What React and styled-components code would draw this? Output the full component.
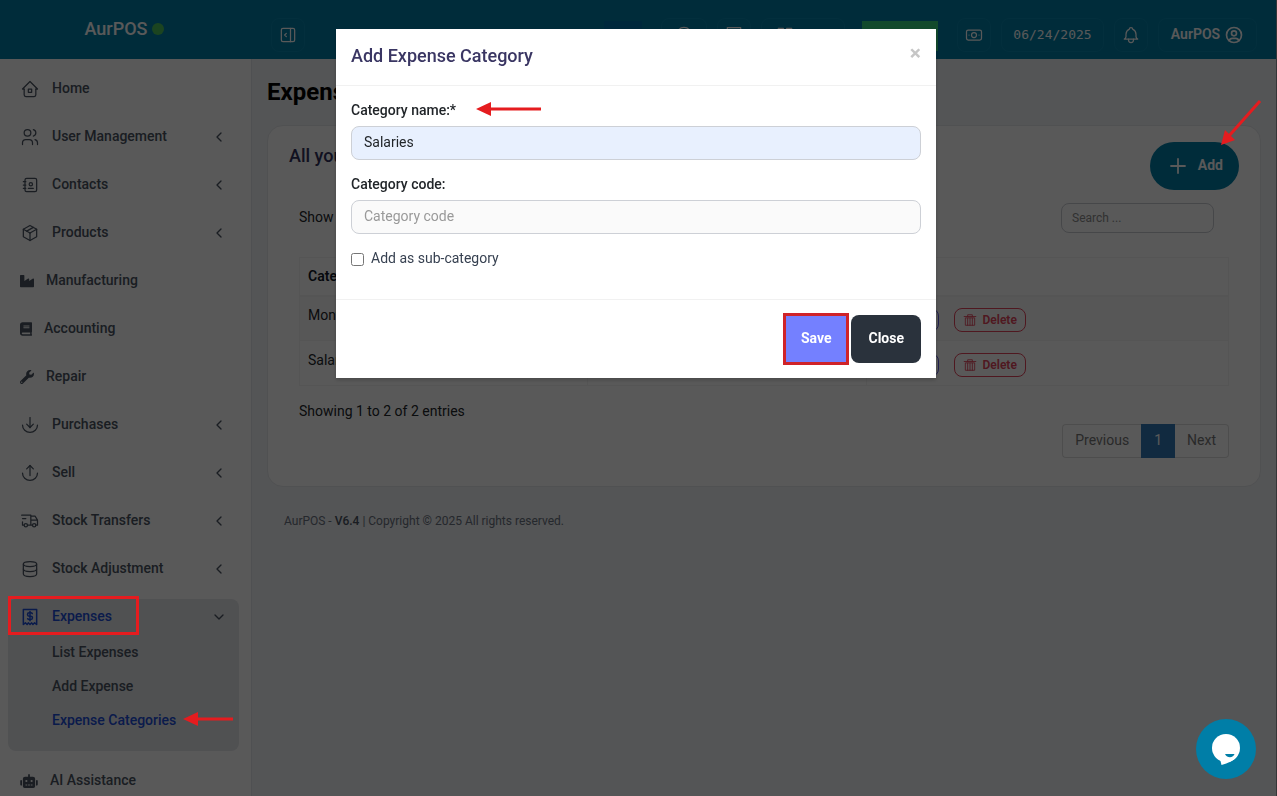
import React from 'react';
import styled, { createGlobalStyle } from 'styled-components';
import { FaBook, FaIndustry, FaRobot, FaWrench } from 'react-icons/fa';

const GlobalStyle = createGlobalStyle`
  * {
    box-sizing: border-box;
  }
  body {
    margin: 0;
    font-family: Roboto, "Liberation Sans", sans-serif;
    font-size: 14px;
    line-height: 20px;
    color: #212529;
    background: #f0f2f5;
    overflow: hidden;
  }
  button, input, select {
    font-family: inherit;
    font-size: inherit;
    line-height: inherit;
  }
  a {
    color: inherit;
    text-decoration: none;
  }
`

const RED = '#e51c1f';

const Page = styled.div`
  display: flex;
  flex-direction: column;
  height: 100vh;
  overflow: hidden;
  border-right: 1px solid #98989f;
`

const Header = styled.header`
  display: flex;
  flex: none;
  height: 59px;
  color: #ffffff;
  background: #007ea7;
`

const Brand = styled.a`
  display: flex;
  align-items: center;
  justify-content: center;
  gap: 4px;
  width: 248px;
  height: 58px;
  flex: none;
  font-size: 18px;
  font-weight: 500;
`

const OnlineDot = styled.span`
  width: 12px;
  height: 12px;
  border-radius: 50%;
  background: #4fc45c;
`

const Toolbar = styled.div`
  display: flex;
  flex: 1;
  align-items: flex-start;
  gap: 10px;
  padding: 18px 19px 0 23px;
`

const ToolButton = styled.button`
  display: flex;
  align-items: center;
  justify-content: ${props => props.$align || 'center'};
  gap: 4px;
  flex: none;
  width: ${props => props.$width || 34}px;
  height: 34px;
  padding: ${props => (props.$align ? '0 13px' : '0')};
  border: 1px solid #0a86ae;
  border-radius: 8px;
  color: #ffffff;
  font-size: 14px;
  font-weight: 600;
  background: transparent;
`

const DateButton = styled(ToolButton)`
  font-family: "DejaVu Sans Mono", monospace;
  font-size: 13px;
  font-weight: 400;
`

const Spacer = styled.div`
  flex: 1;
`

const FlatButton = styled.button`
  display: flex;
  align-items: center;
  justify-content: ${props => props.$align || 'center'};
  flex: none;
  width: ${props => props.$width}px;
  height: 30px;
  margin: 3px 9px 0 7px;
  padding: 0 14px;
  border: 0;
  color: #ffffff;
  font-weight: 600;
  background: ${props => props.$color};
`

const Columns = styled.div`
  display: flex;
  flex: 1;
  min-height: 0;
`

const Sidebar = styled.nav`
  display: flex;
  flex-direction: column;
  gap: 12px;
  flex: none;
  width: 252px;
  padding: 12px 12px 0 8px;
  border-right: 1px solid #e2e5ea;
  background: #ffffff;
  overflow: hidden;
`

const NavLink = styled.a`
  position: relative;
  display: flex;
  align-items: center;
  gap: 12px;
  flex: none;
  height: 36px;
  padding: 0 12px;
  font-weight: 500;
  color: ${props => (props.$active ? '#1d4ed8' : '#4b5563')};
  svg {
    flex: none;
  }
`

const NavText = styled.span`
  flex: 1;
  padding-bottom: 2px;
`

const SolidIcon = styled.span`
  display: flex;
  width: ${props => props.$width}px;
  svg {
    width: 100%;
    height: 14px;
  }
`

const Chevron = styled.span`
  display: flex;
  color: #4b5563;
`

const NavGroup = styled.div`
  flex: none;
  border-radius: 8px;
  background: #e5e7eb;
`

const SubMenu = styled.div`
  display: flex;
  flex-direction: column;
  align-items: flex-start;
  gap: 14px;
  padding: 7px 0 21px 44px;
`

const SubLink = styled.a`
  display: flex;
  align-items: center;
  gap: 7px;
  height: 20px;
  font-weight: 500;
  color: ${props => (props.$active ? '#1d4ed8' : '#4b5563')};
`

const Main = styled.main`
  flex: 1;
  min-width: 0;
  padding: 17px 15px 0;
`

const PageTitle = styled.h1`
  margin: 0 0 17px;
  font-size: 24px;
  line-height: 32px;
  font-weight: 700;
  color: #000000;
`

const Card = styled.section`
  padding: 16px 21px 28px;
  border: 1px solid #e5e7eb;
  border-radius: 16px;
  background: #ffffff;
`

const CardHead = styled.div`
  display: flex;
  justify-content: space-between;
  align-items: flex-start;
`

const CardTitle = styled.h2`
  margin: 4px 0 0;
  font-size: 18px;
  line-height: 20px;
  font-weight: 500;
  color: #32325d;
`

const AddButton = styled.button`
  position: relative;
  display: flex;
  align-items: center;
  gap: 8px;
  height: 48px;
  padding: 0 16px;
  border: 0;
  border-radius: 24px;
  color: #ffffff;
  font-weight: 700;
  background: #007ea7;
`

const ButtonText = styled.span`
  padding-bottom: 2px;
`

const TableTools = styled.div`
  display: flex;
  justify-content: space-between;
  align-items: center;
  padding: 13px 25px 24px 10px;
`

const ShowLabel = styled.label`
  display: flex;
  align-items: center;
  gap: 5px;
  padding-bottom: 2px;
`

const ShowSelect = styled.select`
  height: 28px;
  border: 1px solid #d1d5db;
  border-radius: 8px;
  background: #ffffff;
`

const Search = styled.input`
  width: 153px;
  height: 30px;
  padding: 0 10px;
  border: 1px solid #c9ccd2;
  border-radius: 8px;
  font-size: 12px;
  background: transparent;
  &::placeholder {
    color: #8d8d8d;
  }
`

const TableWrap = styled.div`
  padding: 0 10px;
`

const Table = styled.table`
  width: 100%;
  border-collapse: collapse;
  border: 1px solid #f4f4f4;
  table-layout: fixed;
  th, td {
    padding: 0 8px;
    border: 1px solid #f4f4f4;
    text-align: left;
  }
  th {
    height: 38px;
    border-bottom-width: 2px;
    font-weight: 600;
    color: #111827;
  }
  td {
    height: 45px;
    padding-bottom: 7px;
  }
  tbody tr:nth-child(odd) {
    background: #f9f9f9;
  }
`

const Actions = styled.div`
  display: flex;
  gap: 15px;
  padding-top: 10px;
`

const RowButton = styled.button`
  display: flex;
  align-items: center;
  justify-content: center;
  gap: 6px;
  width: ${props => props.$width}px;
  height: 24px;
  padding: 0;
  border: 1px solid ${props => props.$color};
  border-radius: 8px;
  color: ${props => props.$color};
  font-size: 12px;
  font-weight: 600;
  background: transparent;
`

const Entries = styled.div`
  padding: 15px 10px 3px;
`

const Pager = styled.div`
  display: flex;
  justify-content: flex-end;
  padding: 0 10px;
`

const PageButton = styled.button`
  height: 34px;
  padding: 0 12px 2px;
  border: 1px solid ${props => (props.$current ? '#337ab7' : '#dddddd')};
  color: ${props => (props.$current ? '#ffffff' : '#777777')};
  background: ${props => (props.$current ? '#337ab7' : 'transparent')};
  &:first-child {
    border-right: 0;
    border-radius: 4px 0 0 4px;
  }
  &:last-child {
    border-left: 0;
    border-radius: 0 4px 4px 0;
  }
`

const Footer = styled.footer`
  padding: 24px 17px;
  font-size: 12px;
  color: #6b7280;
  b {
    font-weight: 500;
    color: #4b5563;
  }
`

const Backdrop = styled.div`
  position: fixed;
  inset: 0;
  z-index: 10;
  display: flex;
  justify-content: center;
  align-items: flex-start;
  padding-top: 29px;
  background: rgba(0, 0, 0, 0.65);
`

const Modal = styled.form`
  width: 600px;
  margin-right: 5px;
  background: #ffffff;
  box-shadow: 0 2px 4px rgba(0, 0, 0, 0.2);
`

const ModalHead = styled.div`
  display: flex;
  justify-content: space-between;
  align-items: flex-start;
  padding: 14px 15px 16px;
  border-bottom: 1px solid #f1f1f1;
`

const ModalTitle = styled.h4`
  margin: 0;
  font-size: 18px;
  line-height: 26px;
  font-weight: 500;
  color: #3a3663;
`

const ModalClose = styled.button`
  padding: 0;
  border: 0;
  font-size: 21px;
  line-height: 20px;
  font-weight: 700;
  color: #c6c6c6;
  background: transparent;
`

const ModalBody = styled.div`
  padding: 15px;
`

const Field = styled.div`
  margin-bottom: 15px;
`

const LabelRow = styled.div`
  display: flex;
  align-items: center;
  gap: 20px;
  height: 20px;
  margin-bottom: 5px;
  padding-bottom: 2px;
  label {
    font-weight: 500;
    color: #212529;
  }
`

const TextInput = styled.input`
  display: block;
  width: 100%;
  height: 34px;
  padding: 0 12px 2px;
  border: 1px solid #cdd0d6;
  border-radius: 8px;
  color: #212529;
  background: ${props => (props.$filled ? '#e8f0fe' : '#fafafa')};
  &::placeholder {
    color: #999999;
  }
`

const CheckRow = styled.div`
  display: flex;
  align-items: center;
  gap: 7px;
  height: 20px;
  margin-bottom: 15px;
  label {
    padding-bottom: 2px;
    color: #374151;
  }
  input {
    width: 13px;
    height: 13px;
    margin: 0;
  }
`

const ModalFoot = styled.div`
  display: flex;
  justify-content: flex-end;
  gap: 4px;
  padding: 15px;
  border-top: 1px solid #f1f1f1;
`

const ModalButton = styled.button`
  height: 48px;
  padding: 0 17px 2px;
  border: 0;
  border-radius: 8px;
  color: #ffffff;
  font-weight: 700;
  background: ${props => props.$color};
`

const SaveButton = styled(ModalButton)`
  padding: 0 16px 2px;
  border-radius: 0;
  outline: 3px solid #cf2329;
  outline-offset: -1px;
`

const HighlightBox = styled.span`
  position: absolute;
  z-index: 20;
  left: 0;
  top: -3px;
  width: 131px;
  height: 39px;
  border: 3px solid ${RED};
`

const ArrowSvg = styled.svg`
  position: relative;
  z-index: 20;
  flex: none;
`

const AddArrow = styled(ArrowSvg)`
  position: absolute;
  left: 70px;
  top: -44px;
`

const ChatButton = styled.button`
  position: fixed;
  right: 21px;
  bottom: 17px;
  z-index: 20;
  width: 60px;
  height: 60px;
  padding: 0;
  border: 0;
  border-radius: 50%;
  background: #007ea7;
  svg {
    display: block;
  }
`

const icons = {
  home: ['M5 12H3l9-9 9 9h-2', 'M5 12v7a2 2 0 0 0 2 2h10a2 2 0 0 0 2-2v-7', 'M10 12h4v4h-4z'],
  users: ['M5 7a4 4 0 1 0 8 0a4 4 0 1 0-8 0', 'M3 21v-2a4 4 0 0 1 4-4h4a4 4 0 0 1 4 4v2', 'M16 3.13a4 4 0 0 1 0 7.75', 'M21 21v-2a4 4 0 0 0-3-3.85'],
  contacts: ['M20 6v12a2 2 0 0 1-2 2H8a2 2 0 0 1-2-2V6a2 2 0 0 1 2-2h10a2 2 0 0 1 2 2z', 'M10 16h6', 'M11 11a2 2 0 1 0 4 0a2 2 0 1 0-4 0', 'M4 8h3', 'M4 12h3', 'M4 16h3'],
  box: ['M12 3l8 4.5v9L12 21l-8-4.5v-9z', 'M12 12l8-4.5', 'M12 12v9', 'M12 12L4 7.5', 'M16 5.25l-8 4.5'],
  arcDown: ['M12 3v12', 'M16 11l-4 4l-4-4', 'M3 12a9 9 0 0 0 18 0'],
  arcUp: ['M12 15V3', 'M16 7l-4-4l-4 4', 'M3 12a9 9 0 0 0 18 0'],
  truck: ['M5 17a2 2 0 1 0 4 0a2 2 0 1 0-4 0', 'M15 17a2 2 0 1 0 4 0a2 2 0 1 0-4 0', 'M5 17H3v-4M2 5h11v12m-4 0h6m4 0h2v-6h-8m0-5h5l3 5', 'M3 9h4'],
  database: ['M4 6a8 3 0 1 0 16 0a8 3 0 1 0-16 0', 'M4 6v6a8 3 0 0 0 16 0V6', 'M4 12v6a8 3 0 0 0 16 0v-6'],
  receipt: ['M4 21V3h16v18l-2.500-2-2 2-1.500-2-2 2-2-2-1.500 2-2-2z', 'M14.8 8A2 2 0 0 0 13 7h-2a2 2 0 1 0 0 4h2a2 2 0 1 1 0 4h-2a2 2 0 0 1-1.800-1', 'M12 5.500v11'],
  chevronLeft: ['M15 6l-6 6l6 6'],
  chevronDown: ['M6 9l6 6l6-6'],
  collapse: ['M4 6a2 2 0 0 1 2-2h12a2 2 0 0 1 2 2v12a2 2 0 0 1-2 2H6a2 2 0 0 1-2-2z', 'M15 4v16', 'M10 10l-2 2l2 2'],
  cash: ['M9 12a3 3 0 1 0 6 0a3 3 0 1 0-6 0', 'M3 8a2 2 0 0 1 2-2h14a2 2 0 0 1 2 2v8a2 2 0 0 1-2 2H5a2 2 0 0 1-2-2z', 'M18 12h.01', 'M6 12h.01'],
  bell: ['M10 5a2 2 0 1 1 4 0a7 7 0 0 1 4 6v3a4 4 0 0 0 2 3H4a4 4 0 0 0 2-3v-3a7 7 0 0 1 4-6', 'M9 17v1a3 3 0 0 0 6 0v-1'],
  user: ['M3 12a9 9 0 1 0 18 0a9 9 0 1 0-18 0', 'M9 10a3 3 0 1 0 6 0a3 3 0 1 0-6 0', 'M6.168 18.849A4 4 0 0 1 10 16h4a4 4 0 0 1 3.834 2.855'],
  plus: ['M12 5v14', 'M5 12h14'],
  help: ['M3 12a9 9 0 1 0 18 0a9 9 0 1 0-18 0', 'M12 8v8', 'M8 12h8'],
  calculator: ['M4 3h16v18H4z', 'M8 7h8v3H8z'],
  grid: ['M4 4h6v6H4z', 'M14 4h6v6h-6z', 'M4 14h6v6H4z', 'M14 14h6v6h-6z'],
  bolt: ['M13 3v7h6l-8 11v-7H5z'],
  trash: ['M2 6h20', 'M8 6V3h8v3', 'M4 9v12h16V9z', 'M8 9v12', 'M12 9v12', 'M16 9v12'],
  edit: ['M4 20h4L19 9l-4-4L4 16z'],
}

const Icon = ({ name, size = 20, stroke = 2 }) => (
  <svg width={size} height={size} viewBox="0 0 24 24" fill="none" stroke="currentColor" strokeWidth={stroke} strokeLinecap="round" strokeLinejoin="round" aria-hidden="true">
    {icons[name].map(d => <path key={d} d={d} />)}
  </svg>
)

const LeftArrow = ({ width }) => (
  <ArrowSvg width={width} height="16" viewBox={`0 0 ${width} 16`} aria-hidden="true">
    <path d="M0 7L15 0v14z" fill={RED} />
    <path d={`M13 7H${width}`} stroke={RED} strokeWidth="3" />
  </ArrowSvg>
)

const menu = [
  { text: 'Home', icon: 'home' },
  { text: 'User Management', icon: 'users', more: true },
  { text: 'Contacts', icon: 'contacts', more: true },
  { text: 'Products', icon: 'box', more: true },
  { text: 'Manufacturing', solid: <FaIndustry />, width: 14 },
  { text: 'Accounting', solid: <FaBook />, width: 12 },
  { text: 'Repair', solid: <FaWrench />, width: 14 },
  { text: 'Purchases', icon: 'arcDown', more: true },
  { text: 'Sell', icon: 'arcUp', more: true },
  { text: 'Stock Transfers', icon: 'truck', more: true },
  { text: 'Stock Adjustment', icon: 'database', more: true },
]

const rows = [
  { name: 'Monthly Rent', code: '' },
  { name: 'Salaries', code: '' },
]

const SideMenu = () => (
  <Sidebar>
    {menu.map(item => (
      <NavLink href="#" key={item.text}>
        {item.solid ? <SolidIcon $width={item.width}>{item.solid}</SolidIcon> : <Icon name={item.icon} stroke={1.5} />}
        <NavText>{item.text}</NavText>
        {item.more && <Chevron><Icon name="chevronLeft" size={16} /></Chevron>}
      </NavLink>
    ))}
    <NavGroup>
      <NavLink href="#" $active>
        <Icon name="receipt" stroke={1.8} />
        <NavText>Expenses</NavText>
        <HighlightBox />
        <Chevron><Icon name="chevronDown" size={16} /></Chevron>
      </NavLink>
      <SubMenu>
        <SubLink href="#">List Expenses</SubLink>
        <SubLink href="#">Add Expense</SubLink>
        <SubLink href="#" $active>Expense Categories <LeftArrow width={50} /></SubLink>
      </SubMenu>
    </NavGroup>
    <NavLink href="#">
      <SolidIcon $width={18}><FaRobot /></SolidIcon>
      <NavText>AI Assistance</NavText>
    </NavLink>
  </Sidebar>
)

const TopBar = () => (
  <Header>
    <Brand href="#">AurPOS <OnlineDot /></Brand>
    <Toolbar>
      <ToolButton aria-label="Collapse sidebar"><Icon name="collapse" stroke={1.5} /></ToolButton>
      <Spacer />
      <FlatButton $width={38} $color="#0074ac" aria-label="Shop" />
      <ToolButton $width={46} aria-label="New"><Icon name="help" stroke={1.5} /></ToolButton>
      <ToolButton aria-label="Calculator"><Icon name="calculator" stroke={1.5} /></ToolButton>
      <ToolButton $width={84} $align="flex-start" aria-label="Point of sale"><Icon name="grid" stroke={1.5} /></ToolButton>
      <FlatButton $width={76} $color="#35d37f" $align="flex-start" aria-label="Quick sale"><Icon name="bolt" size={16} /></FlatButton>
      <ToolButton aria-label="Cash register"><Icon name="cash" stroke={1.5} /></ToolButton>
      <DateButton $width={103}>06/24/2025</DateButton>
      <ToolButton aria-label="Notifications"><Icon name="bell" stroke={1.5} /></ToolButton>
      <ToolButton $width={99}><ButtonText>AurPOS</ButtonText> <Icon name="user" /></ToolButton>
    </Toolbar>
  </Header>
)

const Categories = () => (
  <Main>
    <PageTitle>Expense Categories</PageTitle>
    <Card>
      <CardHead>
        <CardTitle>All your expense categories</CardTitle>
        <AddButton>
          <Icon name="plus" size={24} stroke={1.8} /> <ButtonText>Add</ButtonText>
          <AddArrow width="44" height="50" viewBox="0 0 44 50" aria-hidden="true">
            <path d="M1 47L5 32L15 42z" fill={RED} />
            <path d="M8 39L40 3" stroke={RED} strokeWidth="3" />
          </AddArrow>
        </AddButton>
      </CardHead>
      <TableTools>
        <ShowLabel>
          Show
          <ShowSelect defaultValue="25"><option>25</option></ShowSelect>
          entries
        </ShowLabel>
        <Search type="search" placeholder="Search ..." aria-label="Search" />
      </TableTools>
      <TableWrap>
        <Table>
          <colgroup>
            <col width="31%" />
            <col width="30%" />
            <col />
          </colgroup>
          <thead>
            <tr><th>Category name</th><th>Category code</th><th>Action</th></tr>
          </thead>
          <tbody>
            {rows.map(row => (
              <tr key={row.name}>
                <td>{row.name}</td>
                <td>{row.code}</td>
                <td>
                  <Actions>
                    <RowButton $width={64} $color="#5e5adb"><Icon name="edit" size={14} /> Edit</RowButton>
                    <RowButton $width={72} $color="#e3455c"><Icon name="trash" size={14} stroke={1.5} /> Delete</RowButton>
                  </Actions>
                </td>
              </tr>
            ))}
          </tbody>
        </Table>
      </TableWrap>
      <Entries>Showing 1 to 2 of 2 entries</Entries>
      <Pager>
        <PageButton>Previous</PageButton>
        <PageButton $current>1</PageButton>
        <PageButton>Next</PageButton>
      </Pager>
    </Card>
    <Footer>AurPOS - <b>V6.4</b> | Copyright © 2025 All rights reserved.</Footer>
  </Main>
)

const CategoryModal = () => (
  <Backdrop>
    <Modal role="dialog" aria-labelledby="modal-title" onSubmit={e => e.preventDefault()}>
      <ModalHead>
        <ModalTitle id="modal-title">Add Expense Category</ModalTitle>
        <ModalClose type="button" aria-label="Close">×</ModalClose>
      </ModalHead>
      <ModalBody>
        <Field>
          <LabelRow>
            <label htmlFor="name">Category name:*</label>
            <LeftArrow width={65} />
          </LabelRow>
          <TextInput id="name" type="text" defaultValue="Salaries" $filled />
        </Field>
        <Field>
          <LabelRow><label htmlFor="code">Category code:</label></LabelRow>
          <TextInput id="code" type="text" placeholder="Category code" />
        </Field>
        <CheckRow>
          <input id="sub" type="checkbox" />
          <label htmlFor="sub">Add as sub-category</label>
        </CheckRow>
      </ModalBody>
      <ModalFoot>
        <SaveButton type="submit" $color="#7480ff">Save</SaveButton>
        <ModalButton type="button" $color="#2a323c">Close</ModalButton>
      </ModalFoot>
    </Modal>
  </Backdrop>
)

const App = () => (
  <>
    <GlobalStyle />
    <Page>
      <TopBar />
      <Columns>
        <SideMenu />
        <Categories />
      </Columns>
    </Page>
    <CategoryModal />
    <ChatButton aria-label="Open chat">
      <svg width="60" height="60" viewBox="0 0 60 60" aria-hidden="true">
        <circle cx="30" cy="29" r="14" fill="#ffffff" />
        <path d="M24 40l1.500 6C32 44 38 42 41 37z" fill="#ffffff" />
        <path d="M29 35h9.500c-1 4-7.500 4.500-9.500 0z" fill="#007ea7" />
      </svg>
    </ChatButton>
  </>
)

export default App;
